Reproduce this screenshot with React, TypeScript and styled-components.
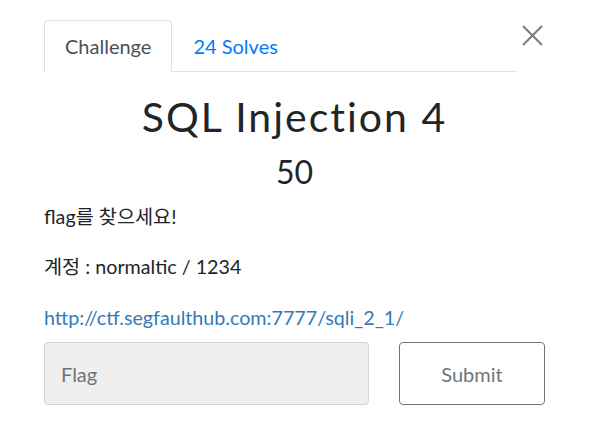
import React from "react";
import styled, { createGlobalStyle } from "styled-components";

const Global = createGlobalStyle`
  html, body { margin: 0; padding: 0; background: #fff; }
  body { font-family: Lato, "Noto Sans CJK KR", sans-serif; color: #212529; }
`;

const Modal = styled.div`
  padding: 20px 57px 0 44px;
`;

const Header = styled.div`
  display: flex;
  align-items: flex-start;
`;

const Tabs = styled.ul`
  flex: 1;
  display: flex;
  list-style: none;
  margin: 0;
  padding: 0;
  border-bottom: 1px solid #dee2e6;
`;

const Tab = styled.li<{ $active?: boolean }>`
  margin-bottom: -1px;
  padding: 0 20px;
  height: 52px;
  box-sizing: border-box;
  display: flex;
  align-items: center;
  font-size: 20px;
  border: 1px solid ${(p) => (p.$active ? "#dee2e6" : "transparent")};
  border-bottom-color: ${(p) => (p.$active ? "#fff" : "transparent")};
  border-radius: 4px 4px 0 0;
  background: ${(p) => (p.$active ? "#fff" : "transparent")};
  color: ${(p) => (p.$active ? "#495057" : "#007bff")};
`;

const Close = styled.button`
  width: 28px;
  height: 30px;
  margin-top: 0;
  padding: 0 2px 0 0;
  border: 0;
  background: none;
  display: flex;
  align-items: center;
  justify-content: flex-end;
`;

const Title = styled.h2`
  margin: 20px 0 0;
  text-align: center;
  font-weight: 400;
  font-size: 41px;
  line-height: 1.2;
  letter-spacing: 2px;
`;

const Points = styled.h4`
  margin: 12px 0 0;
  text-align: center;
  font-weight: 400;
  font-size: 32px;
  line-height: 1.2;
`;

const Description = styled.div`
  margin-top: 10px;
  font-size: 19.7px;
  line-height: 29px;
`;

const Para = styled.p`
  margin: 0 0 21.5px;
`;

const Link = styled.a`
  color: #337ab7;
  text-decoration: none;
`;

const SubmitRow = styled.div`
  display: flex;
  gap: 30px;
  margin-top: -11px;
`;

const FlagInput = styled.input`
  flex: 0 0 325px;
  height: 63px;
  box-sizing: border-box;
  background: #efefef;
  border: 1px solid #ced4da;
  border-radius: 4px;
  padding: 0 16px;
  font-family: Lato, sans-serif;
  font-size: 20px;
  color: #495057;
  &::placeholder { color: #6c757d; }
`;

const SubmitButton = styled.button`
  flex: 0 0 146px;
  height: 63px;
  box-sizing: border-box;
  background: #fff;
  border: 1px solid #6c757d;
  border-radius: 4px;
  font-family: Lato, sans-serif;
  font-size: 20px;
  color: #6c757d;
`;

export default function App() {
  return (
    <>
      <Global />
      <Modal>
        <Header>
          <Tabs>
            <Tab $active>Challenge</Tab>
            <Tab>24 Solves</Tab>
          </Tabs>
          <Close aria-label="Close">
            <svg width="21" height="21" viewBox="0 0 21 21">
              <path d="M1 1L20 20M20 1L1 20" stroke="#808080" strokeWidth="2.2" />
            </svg>
          </Close>
        </Header>
        <Title>SQL Injection 4</Title>
        <Points>50</Points>
        <Description>
          <Para>flag를 찾으세요!</Para>
          <Para>계정 : normaltic / 1234</Para>
          <Para>
            <Link href="#">http://ctf.segfaulthub.com:7777/sqli_2_1/</Link>
          </Para>
        </Description>
        <SubmitRow>
          <FlagInput placeholder="Flag" />
          <SubmitButton>Submit</SubmitButton>
        </SubmitRow>
      </Modal>
    </>
  );
}
